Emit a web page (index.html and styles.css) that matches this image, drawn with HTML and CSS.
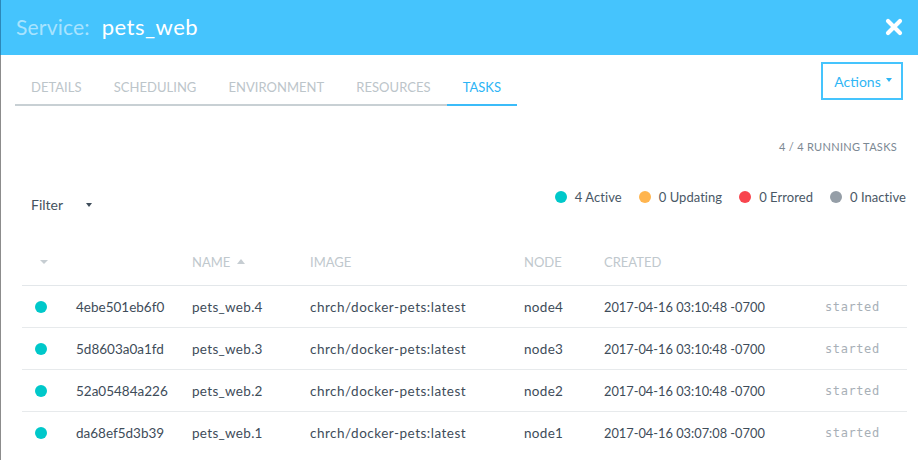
FILE: index.html
```html
<!DOCTYPE html>
<html>
<head>
<meta charset="utf-8">
<link rel="stylesheet" href="styles.css">
</head>
<body>
<div class="page">
  <header class="header">
    <div class="title"><span class="title-label">Service:</span><span class="title-name">pets_web</span></div>
    <svg class="close" width="18" height="18" viewBox="0 0 18 18"><path d="M3 3 L15 15 M15 3 L3 15" stroke="#fff" stroke-width="4.2" stroke-linecap="round"/></svg>
  </header>
  <div class="content">
    <div class="tabs-row">
      <nav class="tabs">
        <span class="tab">Details</span>
        <span class="tab">Scheduling</span>
        <span class="tab">Environment</span>
        <span class="tab">Resources</span>
        <span class="tab active">Tasks</span>
      </nav>
      <button class="actions">Actions <span class="caret-sm"></span></button>
    </div>
    <div class="running">4 / 4 RUNNING TASKS</div>
    <div class="filter-row">
      <div class="filter">Filter <span class="caret-dark"></span></div>
      <div class="legend">
        <span class="legend-item"><span class="dot teal"></span>4 Active</span>
        <span class="legend-item"><span class="dot orange"></span>0 Updating</span>
        <span class="legend-item"><span class="dot red"></span>0 Errored</span>
        <span class="legend-item"><span class="dot grey"></span>0 Inactive</span>
      </div>
    </div>
    <div class="table">
      <div class="row head">
        <div class="c c-dot"><span class="caret-light"></span></div>
        <div class="c"></div>
        <div class="c">NAME <span class="up"></span></div>
        <div class="c">IMAGE</div>
        <div class="c">NODE</div>
        <div class="c">CREATED</div>
        <div class="c"></div>
      </div>
      <div class="row">
        <div class="c c-dot"><span class="dot teal"></span></div>
        <div class="c">4ebe501eb6f0</div>
        <div class="c c-name">pets_web.4</div>
        <div class="c c-img">chrch/docker-pets:latest</div>
        <div class="c c-name">node4</div>
        <div class="c c-date">2017-04-16 03:10:48 -0700</div>
        <div class="c status">started</div>
      </div>
      <div class="row">
        <div class="c c-dot"><span class="dot teal"></span></div>
        <div class="c">5d8603a0a1fd</div>
        <div class="c c-name">pets_web.3</div>
        <div class="c c-img">chrch/docker-pets:latest</div>
        <div class="c c-name">node3</div>
        <div class="c c-date">2017-04-16 03:10:48 -0700</div>
        <div class="c status">started</div>
      </div>
      <div class="row">
        <div class="c c-dot"><span class="dot teal"></span></div>
        <div class="c">52a05484a226</div>
        <div class="c c-name">pets_web.2</div>
        <div class="c c-img">chrch/docker-pets:latest</div>
        <div class="c c-name">node2</div>
        <div class="c c-date">2017-04-16 03:10:48 -0700</div>
        <div class="c status">started</div>
      </div>
      <div class="row last">
        <div class="c c-dot"><span class="dot teal"></span></div>
        <div class="c">da68ef5d3b39</div>
        <div class="c c-name">pets_web.1</div>
        <div class="c c-img">chrch/docker-pets:latest</div>
        <div class="c c-name">node1</div>
        <div class="c c-date">2017-04-16 03:07:08 -0700</div>
        <div class="c status">started</div>
      </div>
    </div>
  </div>
</div>
</body>
</html>
```
FILE: styles.css
```css
* { box-sizing: border-box; }
html, body { margin: 0; padding: 0; background: #fff; }
body {
  font-family: Lato, "Open Sans", sans-serif;
  color: #3f4d5a;
  width: 918px;
  height: 460px;
  overflow: hidden;
}
.page {
  border-left: 1px solid #8c8c8c;
  height: 460px;
}
.header {
  height: 55px;
  margin-left: -1px;
  border-left: 1px solid #2c88b9;
  background: #45c4fd;
  display: flex;
  align-items: center;
  justify-content: space-between;
  padding: 0 15px 2px 15px;
}
.title { font-size: 21px; letter-spacing: 0.2px; }
.title-label { color: rgba(255,255,255,0.55); margin-right: 12px; }
.title-name { color: #fff; font-size: 22px; letter-spacing: 0.5px; }
.close { margin-top: 1px; }
.content { padding: 0 11px 0 14px; }
.tabs-row {
  display: flex;
  justify-content: space-between;
  align-items: flex-start;
  padding-top: 7px;
}
.tabs { display: flex; border-bottom: 2px solid #c8d0d4; }
.tab {
  font-size: 13px;
  line-height: 18px;
  letter-spacing: 0.04px;
  text-transform: uppercase;
  color: #bcc5ca;
  padding: 16px 16px 8px 16px;
  margin-bottom: -2px;
  border-bottom: 2px solid transparent;
}
.tab.active { color: #2cb4f5; border-bottom-color: #3bbcf9; padding-right: 16px; }
.actions {
  width: 82px;
  height: 38px;
  margin-right: 4px;
  border: 2px solid #45c4fd;
  background: #fff;
  color: #2fb6f5;
  font-family: inherit;
  font-size: 14px;
  padding: 0 0 0 2px;
  display: flex;
  align-items: center;
  justify-content: center;
  gap: 5px;
}
.caret-sm {
  width: 0; height: 0;
  border-left: 3.5px solid transparent;
  border-right: 3.5px solid transparent;
  border-top: 4px solid #2fb6f5;
  margin-top: -2px;
}
.running {
  margin-top: 33px;
  text-align: right;
  font-size: 11px;
  line-height: 16px;
  letter-spacing: 0.3px;
  color: #7b8893;
  padding-right: 10px;
}
.filter-row {
  display: flex;
  justify-content: space-between;
  align-items: flex-start;
  margin-top: 34px;
  padding-left: 16px;
}
.filter {
  margin-top: 8px;
  font-size: 14px;
  line-height: 16px;
  color: #45525e;
  display: flex;
  align-items: center;
}
.caret-dark {
  margin-left: 23px;
  width: 0; height: 0;
  border-left: 3.5px solid transparent;
  border-right: 3.5px solid transparent;
  border-top: 4px solid #3f4d5a;
}
.legend { display: flex; gap: 17px; font-size: 13px; line-height: 16px; color: #4a5866; letter-spacing: 0.05px; padding-right: 1px; }
.legend-item { display: flex; align-items: center; }
.legend-item .dot { margin-right: 8px; }
.dot {
  display: inline-block;
  width: 12px; height: 12px;
  border-radius: 50%;
}
.teal { background: #00c8ca; }
.orange { background: #ffb54f; }
.red { background: #f8454e; }
.grey { background: #959ea7; }
.table { margin-top: 25px; margin-left: 7px; width: 885px; }
.row {
  display: grid;
  grid-template-columns: 54px 116px 118px 214px 80px 221px 82px;
  height: 42px;
  align-items: center;
  border-bottom: 1px solid #e7eaec;
  font-size: 13.5px;
  color: #3e4c59;
}
.row.last { border-bottom: none; }
.row.head {
  height: 48px;
  font-size: 13px;
  color: #c0c8cd;
  border-bottom-color: #e3e7ea;
}
.c { white-space: nowrap; display: flex; align-items: center; }
.c-name { letter-spacing: 0.3px; }
.c-img { letter-spacing: 0.5px; }
.c-date { font-size: 12.8px; }
.c-dot { padding-left: 13px; }
.row.head .c-dot { padding-left: 18px; }
.caret-light {
  width: 0; height: 0;
  border-left: 4px solid transparent;
  border-right: 4px solid transparent;
  border-top: 4px solid #c6cdd2;
}
.up {
  margin-left: 7px;
  width: 0; height: 0;
  border-left: 4px solid transparent;
  border-right: 4px solid transparent;
  border-bottom: 5px solid #c6cdd2;
}
.status {
  font-family: "DejaVu Sans Mono", "Liberation Mono", monospace;
  font-size: 12px;
  color: #a8b0b7;
  letter-spacing: 0.6px;
}
```
